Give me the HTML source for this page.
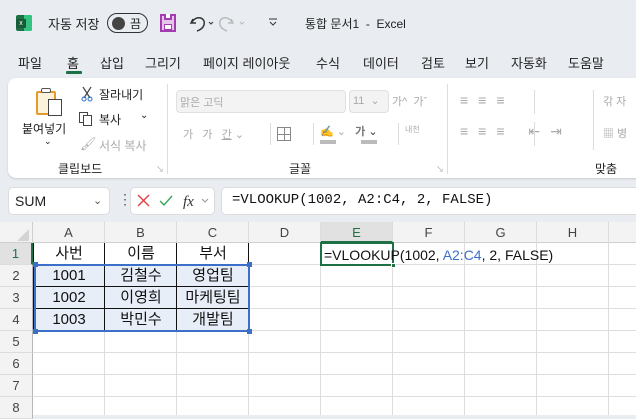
<!DOCTYPE html>
<html><head><meta charset="utf-8"><style>
*{box-sizing:border-box;margin:0;padding:0}
body{width:636px;height:415px;overflow:hidden;background:#e9edf1;font-family:"Liberation Sans","Noto Sans CJK KR",sans-serif;position:relative;color:#222}
.a{position:absolute;white-space:nowrap}
.t{font-size:13px}
.g{color:#aaa}
.grid{position:absolute;left:0;top:222px;width:636px;height:193px;background:#fff}
.ch{position:absolute;top:0;height:21px;background:#f3f3f3;border-right:1px solid #dcdcdc;border-bottom:1px solid #cfcfcf;text-align:center;font-size:13px;line-height:21px;color:#444}
.rh{position:absolute;left:0;width:33px;height:22px;background:#f3f3f3;border-bottom:1px solid #dcdcdc;border-right:1px solid #b8b8b8;text-align:center;font-size:13px;line-height:22px;color:#444}
.vl{position:absolute;top:21px;bottom:0;width:1px;background:#dedede}
.hl{position:absolute;left:33px;right:0;height:1px;background:#dedede}
.c{position:absolute;width:72px;height:22px;text-align:center;font-size:15px;line-height:22px;color:#111}
</style></head><body>
<!-- title bar -->
<div class="a" style="left:16px;top:15px;width:16px;height:16px;background:#1d7044;border-radius:2px"></div>
<div class="a" style="left:24px;top:15px;width:8px;height:16px;background:#33c481;border-radius:0 2px 2px 0"></div>
<div class="a" style="left:16px;top:19px;width:10px;height:9px;background:#185c37;color:#fff;font-size:7px;line-height:9px;text-align:center">x</div>
<div class="a t" style="left:48px;top:14px">자동 저장</div>
<div class="a" style="left:107px;top:13px;width:41px;height:20px;border:1.5px solid #333;border-radius:10px"></div>
<div class="a" style="left:112px;top:17px;width:13px;height:13px;border-radius:50%;background:#444"></div>
<div class="a t" style="left:130px;top:15px;font-size:12px">끔</div>
<div class="a" style="left:160px;top:14px;width:16px;height:18px;border:2px solid #a33cb0;background:#e6c5ea"></div>
<div class="a" style="left:164px;top:14px;width:8px;height:6px;border:2px solid #a33cb0;border-top:none;background:#fff"></div>
<div class="a" style="left:164px;top:24px;width:8px;height:6px;background:#fff;border:1px solid #a33cb0"></div>
<svg class="a" style="left:188px;top:13px" width="70" height="20"><path d="M5 6 L3 10 L8 10 M4 9 C8 2 18 4 16 12 C15 15 12 17 9 18" fill="none" stroke="#333" stroke-width="1.5"/><path d="M21 9 l2 2 l2-2" fill="none" stroke="#333"/><path d="M43 6 L45 10 L40 10 M44 9 C40 2 30 4 32 12 C33 15 36 17 39 18" fill="none" stroke="#bbb" stroke-width="1.5"/><path d="M52 9 l2 2 l2-2" fill="none" stroke="#bbb"/></svg>
<svg class="a" style="left:268px;top:18px" width="10" height="8"><path d="M1 1h8M2 4l3 3 3-3" fill="none" stroke="#333"/></svg>
<div class="a t" style="left:305px;top:15px;font-size:12px">통합 문서1 &nbsp;-&nbsp; Excel</div>
<!-- tabs -->
<div class="a t" style="left:18px;top:53px">파일</div>
<div class="a t" style="left:67px;top:53px">홈</div>
<div class="a" style="left:66px;top:71px;width:16px;height:3px;background:#1e7145;border-radius:1px"></div>
<div class="a t" style="left:100px;top:53px">삽입</div>
<div class="a t" style="left:145px;top:53px">그리기</div>
<div class="a t" style="left:203px;top:53px">페이지 레이아웃</div>
<div class="a t" style="left:316px;top:53px">수식</div>
<div class="a t" style="left:363px;top:53px">데이터</div>
<div class="a t" style="left:421px;top:53px">검토</div>
<div class="a t" style="left:465px;top:53px">보기</div>
<div class="a t" style="left:511px;top:53px">자동화</div>
<div class="a t" style="left:568px;top:53px">도움말</div>
<!-- ribbon -->
<div class="a" style="left:8px;top:78px;width:640px;height:100px;background:#fff;border-radius:8px;box-shadow:0 1px 2px rgba(0,0,0,.15)"></div>
<div class="a" style="left:36px;top:91px;width:20px;height:24px;border:2px solid #e59a2c;background:#fdf3dc;border-radius:2px"></div>
<div class="a" style="left:41px;top:88px;width:10px;height:5px;border:1.5px solid #555;background:#fff;border-radius:2px"></div>
<div class="a" style="left:48px;top:99px;width:14px;height:17px;border:1.5px solid #444;background:#fff"></div>
<div class="a t" style="left:22px;top:120px;font-size:12px">붙여넣기</div>
<div class="a" style="left:44px;top:136px;font-size:9px">⌄</div>
<svg class="a" style="left:80px;top:86px" width="14" height="16"><path d="M3 1 L10 12 M11 1 L4 12" stroke="#444" stroke-width="1.2"/><circle cx="4" cy="13" r="2" fill="none" stroke="#2a6fc9"/><circle cx="10" cy="13" r="2" fill="none" stroke="#2a6fc9"/></svg>
<div class="a t" style="left:99px;top:86px;font-size:12px">잘라내기</div>
<div class="a" style="left:79px;top:112px;width:9px;height:11px;border:1px solid #444"></div>
<div class="a" style="left:83px;top:115px;width:9px;height:11px;border:1px solid #444;background:#fff"></div>
<div class="a t" style="left:99px;top:111px;font-size:12px">복사</div>
<div class="a" style="left:140px;top:110px;font-size:10px">⌄</div>
<div class="a t g" style="left:99px;top:137px;font-size:12px">서식 복사</div>
<div class="a g" style="left:80px;top:136px;font-size:13px">🖌</div>
<div class="a t" style="left:58px;top:160px;font-size:12px">클립보드</div>
<div class="a g" style="left:156px;top:164px;font-size:8px">↘</div>
<div class="a" style="left:167px;top:84px;width:1px;height:90px;background:#ddd"></div>
<div class="a" style="left:176px;top:90px;width:170px;height:23px;background:#f3f3f3;border:1px solid #e0e0e0;border-radius:4px"></div>
<div class="a g" style="left:180px;top:94px;font-size:11px">맑은 고딕</div>
<div class="a" style="left:349px;top:90px;width:40px;height:23px;background:#f3f3f3;border:1px solid #e0e0e0;border-radius:4px"></div>
<div class="a g" style="left:353px;top:94px;font-size:11px">11 &nbsp;⌄</div>
<div class="a g" style="left:392px;top:93px;font-size:11px">가^ &nbsp;가ˇ</div>
<div class="a g" style="left:183px;top:126px;font-size:11px">가 &nbsp;&nbsp;가 &nbsp;&nbsp;<u>간</u> ⌄</div>
<div class="a" style="left:270px;top:123px;width:1px;height:22px;background:#ddd"></div>
<div class="a" style="left:277px;top:127px;width:14px;height:14px;border:1.5px solid #888;background:linear-gradient(#888,#888) 6px 0/1px 14px no-repeat,linear-gradient(#888,#888) 0 6px/14px 1px no-repeat"></div>
<div class="a" style="left:313px;top:123px;width:1px;height:22px;background:#ddd"></div>
<div class="a g" style="left:320px;top:123px;font-size:11px">✍ ⌄ &nbsp;&nbsp;<b style="color:#777">가</b> <span style="color:#333">⌄</span></div>
<div class="a" style="left:320px;top:140px;width:16px;height:4px;background:#bbb"></div>
<div class="a" style="left:361px;top:140px;width:16px;height:4px;background:#bbb"></div>
<div class="a" style="left:398px;top:123px;width:1px;height:22px;background:#ddd"></div>
<div class="a g" style="left:405px;top:124px;font-size:8px">내천</div>
<div class="a t" style="left:289px;top:160px;font-size:12px">글꼴</div>
<div class="a g" style="left:436px;top:164px;font-size:8px">↘</div>
<div class="a" style="left:447px;top:84px;width:1px;height:90px;background:#ddd"></div>
<div class="a g" style="left:460px;top:92px;font-size:14px;letter-spacing:10px">≡≡≡</div>
<div class="a g" style="left:460px;top:123px;font-size:14px;letter-spacing:10px">≡≡≡ ⇤⇥</div>
<div class="a" style="left:534px;top:90px;width:1px;height:24px;background:#ddd"></div>
<div class="a" style="left:534px;top:122px;width:1px;height:24px;background:#ddd"></div>
<div class="a" style="left:593px;top:90px;width:1px;height:60px;background:#ddd"></div>
<div class="a g" style="left:603px;top:93px;font-size:11px">갂 자</div>
<div class="a g" style="left:603px;top:125px;font-size:11px">▦ 병</div>
<div class="a t" style="left:595px;top:160px;font-size:12px">맞춤</div>
<!-- formula bar -->
<div class="a" style="left:8px;top:187px;width:102px;height:28px;background:#fff;border:1px solid #dcdcdc;border-radius:5px"></div>
<div class="a" style="left:15px;top:193px;font-size:14px;color:#222">SUM</div>
<div class="a" style="left:93px;top:194px;font-size:11px;color:#555">⌄</div>
<div class="a" style="left:118px;top:191px;font-size:14px;color:#555">⋮</div>
<div class="a" style="left:130px;top:187px;width:85px;height:28px;background:#fff;border:1px solid #dcdcdc;border-radius:5px"></div>
<svg class="a" style="left:136px;top:193px" width="80" height="16"><path d="M2 2l11 11M13 2L2 13" stroke="#e04040" stroke-width="1.4"/><path d="M24 8l4 4 8-9" fill="none" stroke="#3aa55a" stroke-width="1.4"/><text x="47" y="13" font-family="Liberation Serif" font-style="italic" font-size="15" fill="#333">fx</text><path d="M66 6l3 3 3-3" fill="none" stroke="#999"/></svg>
<div class="a" style="left:221px;top:187px;width:420px;height:28px;background:#fff;border:1px solid #dcdcdc;border-radius:5px 0 0 5px"></div>
<div class="a" style="left:232px;top:192px;font-family:'Liberation Mono',monospace;font-size:14px;color:#111">=VLOOKUP(1002, A2:C4, 2, FALSE)</div>
<!-- grid -->
<div class="grid">
<div class="ch" style="left:0;width:33px;border-right:1px solid #cfcfcf"></div>
<svg class="a" style="left:16px;top:6px" width="14" height="14"><path d="M13 1V13H1Z" fill="#d4d4d4"/></svg>
<div class="ch" style="left:33px;width:72px">A</div>
<div class="ch" style="left:105px;width:72px">B</div>
<div class="ch" style="left:177px;width:72px">C</div>
<div class="ch" style="left:249px;width:72px">D</div>
<div class="ch" style="left:321px;width:72px;background:#e1e1e1;border-bottom:2px solid #1e7145;color:#1e7145">E</div>
<div class="ch" style="left:393px;width:72px">F</div>
<div class="ch" style="left:465px;width:72px">G</div>
<div class="ch" style="left:537px;width:72px">H</div>
<div class="ch" style="left:609px;width:40px"></div>
<div class="rh" style="top:21px;background:#e1e1e1;border-right:2px solid #1e7145;color:#1e7145">1</div>
<div class="rh" style="top:43px">2</div>
<div class="rh" style="top:65px">3</div>
<div class="rh" style="top:87px">4</div>
<div class="rh" style="top:109px">5</div>
<div class="rh" style="top:131px">6</div>
<div class="rh" style="top:153px">7</div>
<div class="rh" style="top:175px">8</div>
<div class="vl" style="left:104px"></div><div class="vl" style="left:176px"></div><div class="vl" style="left:248px"></div><div class="vl" style="left:320px"></div><div class="vl" style="left:392px"></div><div class="vl" style="left:464px"></div><div class="vl" style="left:536px"></div><div class="vl" style="left:608px"></div>
<div class="hl" style="top:42px"></div><div class="hl" style="top:64px"></div><div class="hl" style="top:86px"></div><div class="hl" style="top:108px"></div><div class="hl" style="top:130px"></div><div class="hl" style="top:152px"></div><div class="hl" style="top:174px"></div>
<!-- table -->
<div class="a" style="left:34px;top:43px;width:215px;height:66px;background:#e8eef8"></div>
<div class="a" style="left:33px;top:21px;width:216px;height:88px;border:1px solid #111;border-top:none"></div>
<div class="a" style="left:104px;top:21px;width:1px;height:88px;background:#111"></div>
<div class="a" style="left:176px;top:21px;width:1px;height:88px;background:#111"></div>
<div class="a" style="left:33px;top:64px;width:216px;height:1px;background:#111"></div>
<div class="a" style="left:33px;top:86px;width:216px;height:1px;background:#111"></div>
<div class="a" style="left:34px;top:42px;width:216px;height:68px;border:2px solid #3c70c8"></div>
<div class="a" style="left:33px;top:40px;width:5px;height:5px;background:#3c70c8"></div>
<div class="a" style="left:247px;top:40px;width:5px;height:5px;background:#3c70c8"></div>
<div class="a" style="left:33px;top:107px;width:5px;height:5px;background:#3c70c8"></div>
<div class="a" style="left:247px;top:107px;width:5px;height:5px;background:#3c70c8"></div>
<div class="c" style="left:33px;top:21px">사번</div><div class="c" style="left:105px;top:21px">이름</div><div class="c" style="left:177px;top:21px">부서</div>
<div class="c" style="left:33px;top:43px">1001</div><div class="c" style="left:105px;top:43px">김철수</div><div class="c" style="left:177px;top:43px">영업팀</div>
<div class="c" style="left:33px;top:65px">1002</div><div class="c" style="left:105px;top:65px">이영희</div><div class="c" style="left:177px;top:65px">마케팅팀</div>
<div class="c" style="left:33px;top:87px">1003</div><div class="c" style="left:105px;top:87px">박민수</div><div class="c" style="left:177px;top:87px">개발팀</div>
<!-- active cell -->
<div class="a" style="left:320px;top:20px;width:74px;height:24px;border:2px solid #1e7145;background:#fff"></div>
<div class="a" style="left:391px;top:41px;width:5px;height:5px;background:#1e7145;border:1px solid #fff"></div>
<div class="a" style="left:324px;top:22px;font-size:14px;line-height:22px;color:#111">=VLOOKUP(1002, <span style="color:#3c70c8">A2:C4</span>, 2, FALSE)</div>
</div>
</body></html>
